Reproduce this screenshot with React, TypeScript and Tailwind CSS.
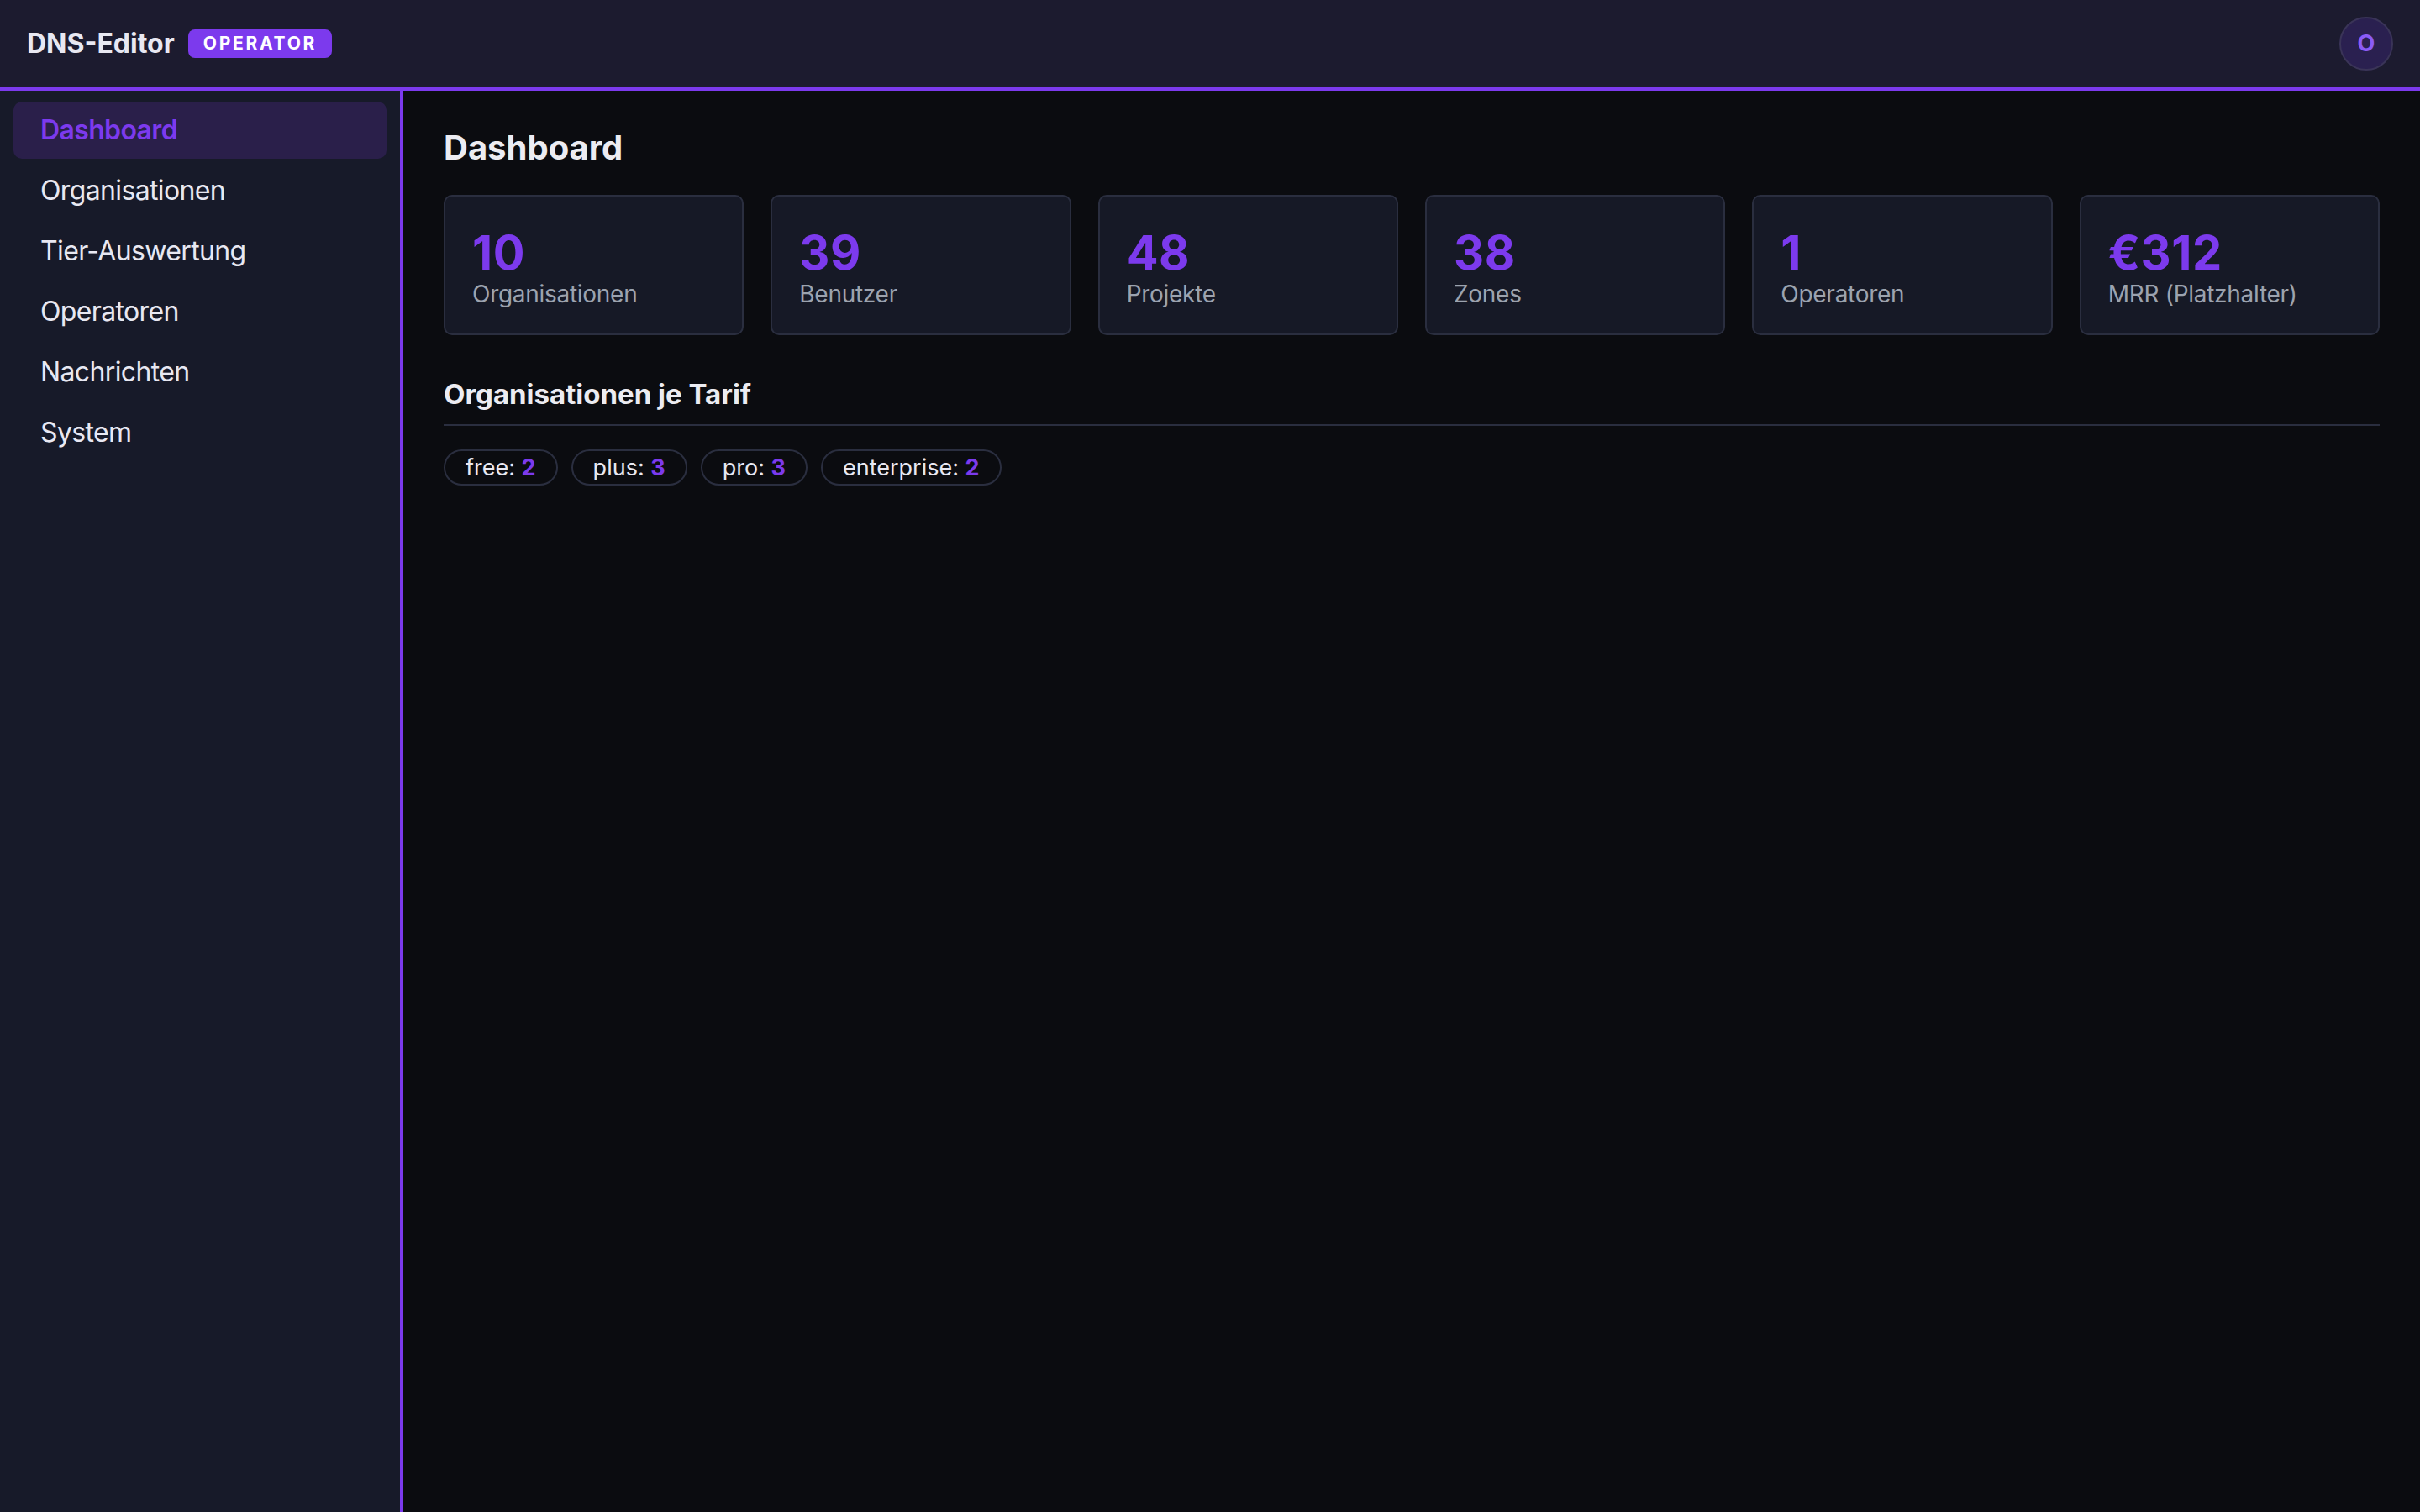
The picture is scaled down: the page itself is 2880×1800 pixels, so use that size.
import React from 'react';

const NAV = ['Dashboard', 'Organisationen', 'Tier-Auswertung', 'Operatoren', 'Nachrichten', 'System'];

const STATS = [
  { value: '10', label: 'Organisationen' },
  { value: '39', label: 'Benutzer' },
  { value: '48', label: 'Projekte' },
  { value: '38', label: 'Zones' },
  { value: '1', label: 'Operatoren' },
  { value: '€312', label: 'MRR (Platzhalter)' },
];

const TIERS = [
  { name: 'free', count: 2 },
  { name: 'plus', count: 3 },
  { name: 'pro', count: 3 },
  { name: 'enterprise', count: 2 },
];

export default function App() {
  return (
    <div
      className="flex h-screen flex-col bg-[#0b0c10] text-[#e5e7eb]"
      style={{ fontFamily: 'Inter, "Noto Sans", sans-serif' }}
    >
      <header className="flex h-[108px] shrink-0 items-center justify-between border-b-4 border-[#7c3aed] bg-[#1c1b2f] px-[32px]">
        <div className="flex items-center gap-[16px]">
          <span className="text-[32px] font-bold leading-[1.5] text-[#e8e8f2]">DNS-Editor</span>
          <span className="rounded-[8px] bg-[#7c3aed] px-[18px] py-[2px] text-[21px] font-bold leading-[30px] tracking-[0.13em] text-white">
            OPERATOR
          </span>
        </div>
        <div className="flex h-[64px] w-[64px] items-center justify-center rounded-full border-2 border-[#3a3458] bg-[#2a2050] text-[27px] font-bold text-[#8b5cf6]">
          O
        </div>
      </header>

      <div className="flex min-h-0 flex-1">
        <aside className="w-[480px] shrink-0 border-r-4 border-[#7c3aed] bg-[#171a29] px-[16px] pt-[13px]">
          <nav className="flex flex-col gap-[4px]">
            {NAV.map((item, i) => (
              <div
                key={item}
                className={
                  i === 0
                    ? 'rounded-[10px] bg-[#2a1f4a] px-[32px] py-[10px] text-[32px] font-semibold leading-[48px] tracking-[-0.02em] text-[#7c3aed]'
                    : 'rounded-[10px] px-[32px] py-[10px] text-[32px] leading-[48px] tracking-[-0.02em] text-[#e8e8f2]'
                }
              >
                {item}
              </div>
            ))}
          </nav>
        </aside>

        <main className="flex-1 px-[48px] pt-[44px]">
          <h1 className="text-[40px] font-bold leading-[1.2] text-[#ececf2]">Dashboard</h1>

          <div className="mt-[32px] grid grid-cols-6 gap-[32px]">
            {STATS.map((s) => (
              <div
                key={s.label}
                className="rounded-[10px] border-2 border-[#2a2e3f] bg-[#161926] px-[32px] pb-[26px] pt-[39px]"
              >
                <div className="text-[56px] font-bold leading-none tracking-[0.01em] text-[#7c3aed]">{s.value}</div>
                <div className="text-[28px] leading-[42px] tracking-[-0.01em] text-[#9ca3af]">{s.label}</div>
              </div>
            ))}
          </div>

          <h2 className="mt-[46px] border-b-2 border-[#2a2e3f] pb-[12px] text-[33px] font-bold leading-[48px] text-[#ececf2]">
            Organisationen je Tarif
          </h2>

          <div className="mt-[28px] flex gap-[16px]">
            {TIERS.map((t) => (
              <span
                key={t.name}
                className="rounded-full border-2 border-[#2a2e3f] px-[24px] text-[27px] leading-[39px] text-[#e8e8f2]"
              >
                {t.name}: <b className="font-bold text-[#7c3aed]">{t.count}</b>
              </span>
            ))}
          </div>
        </main>
      </div>
    </div>
  );
}
